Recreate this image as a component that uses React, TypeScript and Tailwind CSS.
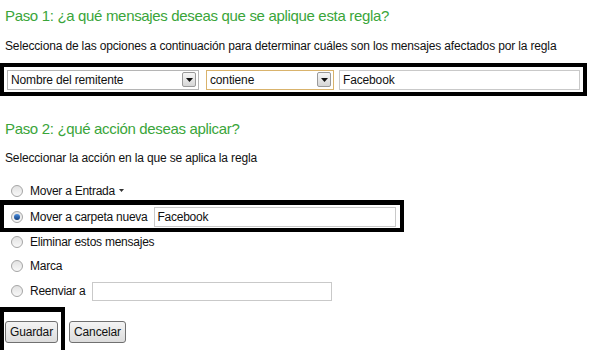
import React from "react";

const font = { fontFamily: '"Liberation Sans", Arial, sans-serif' };

function Arrow() {
  return (
    <div className="flex h-[15px] w-[14px] items-center justify-center rounded-[2px] border border-[#9a9a9a] bg-gradient-to-b from-[#f6f6f6] to-[#d6d6d6]">
      <svg width="7" height="4" viewBox="0 0 7 4">
        <path d="M0 0 H7 L3.5 4 Z" fill="#111" />
      </svg>
    </div>
  );
}

function Select({ label, width, focused }: { label: string; width: string; focused?: boolean }) {
  return (
    <div
      className={`flex h-[20px] items-center justify-between border bg-white pl-[3px] pr-[2px] text-[12px] text-[#111] ${width} ${
        focused ? "border-[#d9b36c]" : "border-[#b5b5b5]"
      }`}
    >
      <span>{label}</span>
      <Arrow />
    </div>
  );
}

function Input({ value, width, height }: { value?: string; width: string; height: string }) {
  return (
    <div className={`flex items-center border border-[#c9c9c9] bg-white pl-[3px] text-[12px] text-[#111] ${width} ${height}`}>
      {value}
    </div>
  );
}

function Radio({ checked }: { checked?: boolean }) {
  return (
    <div className="flex h-[12px] w-[12px] shrink-0 items-center justify-center rounded-full border border-[#a5a5a5] bg-gradient-to-b from-[#e2e2e2] to-[#f8f8f8]">
      {checked && <div className="h-[6px] w-[6px] rounded-full bg-gradient-to-b from-[#4a8ee0] to-[#14407e]" />}
    </div>
  );
}

function Button({ label, width }: { label: string; width: string }) {
  return (
    <div
      className={`flex h-[22px] items-center justify-center rounded-[3px] border border-[#707070] bg-gradient-to-b from-[#f4f4f4] to-[#dcdcdc] text-[12px] text-[#111] ${width}`}
    >
      {label}
    </div>
  );
}

export default function App() {
  return (
    <div className="h-[350px] w-[589px] overflow-hidden bg-white tracking-[-0.15px] text-[#111]" style={font}>
      {/* Paso 1 */}
      <h1 className="pl-[5px] pt-[6px] text-[15px] leading-[20px] tracking-[-0.33px] text-[#3aa53a]">
        Paso 1: ¿a qué mensajes deseas que se aplique esta regla?
      </h1>
      <p className="mt-[12px] whitespace-nowrap pl-[5px] text-[12px] leading-[17px]">
        Selecciona de las opciones a continuación para determinar cuáles son los mensajes afectados por la regla
      </p>
      <div className="mt-[8px] flex h-[33px] w-[587px] items-center border-[4px] border-black pl-[3px]">
        <Select label="Nombre del remitente" width="w-[192px]" />
        <div className="w-[7px]" />
        <Select label="contiene" width="w-[128px]" focused />
        <div className="w-[5px]" />
        <Input value="Facebook" width="w-[241px]" height="h-[20px]" />
      </div>

      {/* Paso 2 */}
      <h2 className="mt-[23px] pl-[5px] text-[15px] leading-[20px] tracking-[-0.33px] text-[#3aa53a]">
        Paso 2: ¿qué acción deseas aplicar?
      </h2>
      <p className="mt-[11px] pl-[5px] text-[12px] leading-[17px]">Seleccionar la acción en la que se aplica la regla</p>

      <div className="mt-[14px] flex h-[19px] items-center gap-[7px] pl-[11px] text-[12px] tracking-[-0.25px]">
        <Radio />
        <span className="flex items-center gap-[4px]">
          Mover a Entrada
          <svg width="5" height="3" viewBox="0 0 5 3">
            <path d="M0 0 H5 L2.5 3 Z" fill="#333" />
          </svg>
        </span>
      </div>
      <div className="flex h-[32px] w-[404px] items-center border-[4px] border-t-[5px] border-black pl-[7px] text-[12px] tracking-[-0.25px]">
        <Radio checked />
        <span className="ml-[7px] whitespace-nowrap">Mover a carpeta nueva</span>
        <div className="ml-[6px]">
          <Input value="Facebook" width="w-[242px]" height="h-[20px]" />
        </div>
      </div>
      <div className="mt-[1px] flex h-[18px] items-center gap-[7px] pl-[11px] text-[12px] tracking-[-0.25px]">
        <Radio />
        <span>Eliminar estos mensajes</span>
      </div>
      <div className="mt-[5px] flex h-[20px] items-center gap-[7px] pl-[11px] text-[12px] tracking-[-0.25px]">
        <Radio />
        <span>Marca</span>
      </div>
      <div className="mt-[5px] flex h-[20px] items-center pl-[11px] text-[12px] tracking-[-0.25px]">
        <Radio />
        <span className="ml-[7px]">Reenviar a</span>
        <div className="ml-[6px]">
          <Input width="w-[240px]" height="h-[19px]" />
        </div>
      </div>

      {/* Botones */}
      <div className="mt-[6px] flex items-start">
        <div className="h-[50px] border-[4px] border-t-[5px] border-black pl-[1px] pr-[3px] pt-[9px]">
          <Button label="Guardar" width="w-[53px]" />
        </div>
        <div className="ml-[4px] mt-[14px]">
          <Button label="Cancelar" width="w-[57px]" />
        </div>
      </div>
    </div>
  );
}
